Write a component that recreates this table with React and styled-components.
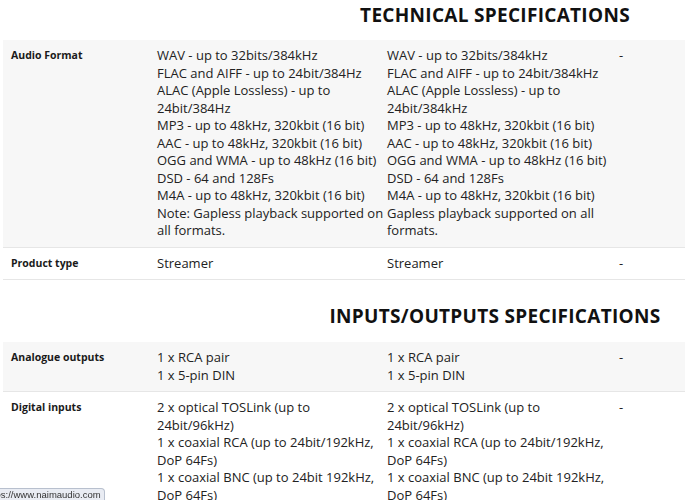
import styled, { createGlobalStyle } from "styled-components";

const GlobalStyle = createGlobalStyle`
  html, body {
    margin: 0;
    padding: 0;
    background: #fff;
    overflow: hidden;
  }
  body {
    font-family: "Open Sans", "Liberation Sans", sans-serif;
    color: #222;
  }
`;

const specs = [
  {
    title: "TECHNICAL SPECIFICATIONS",
    rows: [
      {
        label: "Audio Format",
        a: [
          "WAV - up to 32bits/384kHz",
          "FLAC and AIFF - up to 24bit/384Hz",
          "ALAC (Apple Lossless) - up to 24bit/384Hz",
          "MP3 - up to 48kHz, 320kbit (16 bit)",
          "AAC - up to 48kHz, 320kbit (16 bit)",
          "OGG and WMA - up to 48kHz (16 bit)",
          "DSD - 64 and 128Fs",
          "M4A - up to 48kHz, 320kbit (16 bit)",
          "Note: Gapless playback supported on all formats.",
        ],
        b: [
          "WAV - up to 32bits/384kHz",
          "FLAC and AIFF - up to 24bit/384kHz",
          "ALAC (Apple Lossless) - up to 24bit/384kHz",
          "MP3 - up to 48kHz, 320kbit (16 bit)",
          "AAC - up to 48kHz, 320kbit (16 bit)",
          "OGG and WMA - up to 48kHz (16 bit)",
          "DSD - 64 and 128Fs",
          "M4A - up to 48kHz, 320kbit (16 bit)",
          "Gapless playback supported on all formats.",
        ],
      },
      { label: "Product type", a: ["Streamer"], b: ["Streamer"] },
    ],
  },
  {
    title: "INPUTS/OUTPUTS SPECIFICATIONS",
    rows: [
      {
        label: "Analogue outputs",
        a: ["1 x RCA pair", "1 x 5-pin DIN"],
        b: ["1 x RCA pair", "1 x 5-pin DIN"],
      },
      {
        label: "Digital inputs",
        a: [
          "2 x optical TOSLink (up to 24bit/96kHz)",
          "1 x coaxial RCA (up to 24bit/192kHz, DoP 64Fs)",
          "1 x coaxial BNC (up to 24bit 192kHz, DoP 64Fs)",
        ],
        b: [
          "2 x optical TOSLink (up to 24bit/96kHz)",
          "1 x coaxial RCA (up to 24bit/192kHz, DoP 64Fs)",
          "1 x coaxial BNC (up to 24bit 192kHz, DoP 64Fs)",
        ],
      },
    ],
  },
];

const App = () => {
  return (
    <>
      <GlobalStyle />
      <Page>
        {specs.map((section, si) => (
          <section key={section.title}>
            <Heading $first={si === 0}>{section.title}</Heading>
            {section.rows.map((row, ri) => (
              <Row key={row.label} $shaded={ri % 2 === 0}>
                <Label>{row.label}</Label>
                <Cell>
                  {row.a.map((l) => (
                    <Line key={l}>{l}</Line>
                  ))}
                </Cell>
                <Cell>
                  {row.b.map((l) => (
                    <Line key={l}>{l}</Line>
                  ))}
                </Cell>
                <Cell>-</Cell>
              </Row>
            ))}
          </section>
        ))}
      </Page>
      <StatusBubble>
        <span>https://www.naimaudio.com</span>
      </StatusBubble>
    </>
  );
};

export default App;

const Page = styled.div`
  width: 984px;
  margin-left: 3px;
`;

const Heading = styled.h2`
  margin: ${(p) => (p.$first ? "3px 0 13px" : "24px 0 14px")};
  font-family: "Open Sans", "Liberation Sans", sans-serif;
  font-weight: 700;
  font-size: 19px;
  line-height: 24px;
  text-align: center;
  color: #111;
  letter-spacing: 0.3px;
`;

const Row = styled.div`
  display: grid;
  grid-template-columns: 146px 230px 232px 1fr;
  padding: 7px 0 7px 8px;
  background: ${(p) => (p.$shaded ? "#f7f7f7" : "#fff")};
  border-bottom: 1px solid #e6e6e6;
`;

const Label = styled.div`
  font-size: 10.5px;
  font-weight: 700;
  line-height: 17.5px;
  color: #1a1a1a;
`;

const Cell = styled.div`
  font-size: 13px;
  line-height: 17.5px;
  color: #222;
  padding-right: 2px;
`;

const Line = styled.div``;

const StatusBubble = styled.div`
  position: fixed;
  left: 0;
  bottom: -2px;
  height: 12px;
  padding-right: 3px;
  overflow: hidden;
  background: #e9ecf3;
  border: 1px solid #b8c0ce;
  border-left: none;
  border-top-right-radius: 4px;
  font-family: "Liberation Sans", sans-serif;
  font-size: 9.5px;
  line-height: 12px;
  color: #333;
  span {
    display: block;
    white-space: nowrap;
    margin-left: -15px;
  }
`;
